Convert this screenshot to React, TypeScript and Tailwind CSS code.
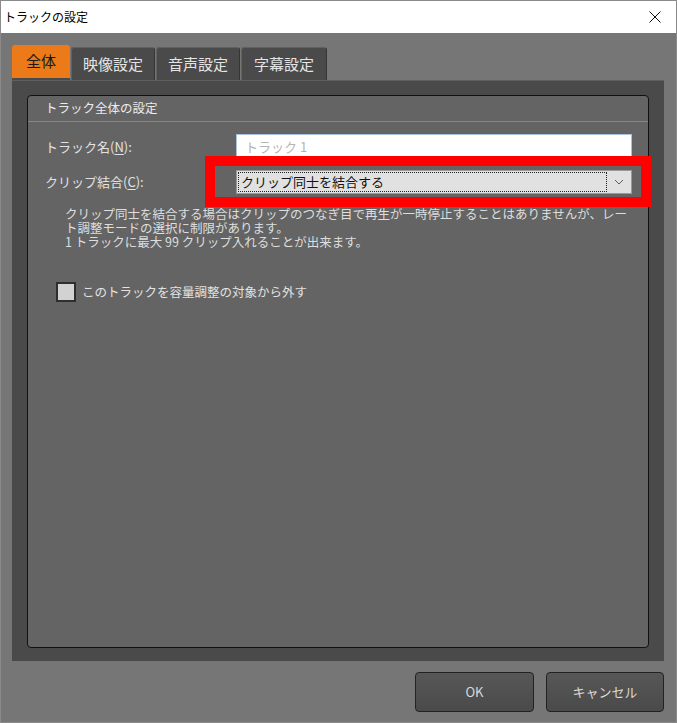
import React from "react";

const jp = { fontFamily: "'Noto Sans CJK JP', 'Noto Sans', sans-serif" };

const Tab = ({ label, w, active }: { label: string; w: string; active?: boolean }) => {
  if (active) {
    return (
      <div className={`${w} h-[35px] bg-[#ec7a18] border-b-2 border-[#4a4a4a] rounded-t-[3px] flex items-center justify-center text-[15px] text-[#1a1a1a]`}>
        {label}
      </div>
    );
  }
  return (
    <div className={`${w} ml-[1px] h-[33px] bg-[#4a4a4a] border-t border-l border-[#606060] border-r border-r-[#353535] rounded-t-[3px] flex items-center justify-center text-[15px] text-[#e4e4e4]`}>
      {label}
    </div>
  );
};

export default function App() {
  return (
    <div
      className="relative w-[677px] h-[723px] border border-[#8a8a8a] flex flex-col"
      style={jp}
    >
      {/* title bar */}
      <div className="h-[32px] bg-white flex items-center justify-between pl-[3px] pr-[15px]">
        <span className="text-[12px] text-black">トラックの設定</span>
        <svg width="12" height="12" viewBox="0 0 12 12">
          <path d="M0.5 0.5 L11.5 11.5 M11.5 0.5 L0.5 11.5" stroke="#111" strokeWidth="1" />
        </svg>
      </div>

      {/* body */}
      <div className="flex-1 bg-[#767676] pt-[12px] pl-[11px] pr-[12px] pb-[10px] flex flex-col">
        <div className="h-[35px] flex items-end">
          <Tab label="全体" w="w-[58px]" active />
          <Tab label="映像設定" w="w-[84px]" />
          <Tab label="音声設定" w="w-[84px]" />
          <Tab label="字幕設定" w="w-[86px]" />
        </div>

        <div className="flex-1 bg-[#4a4a4a] border-t border-[#5e5e5e] pt-[14px] pl-[15px] pr-[15px] pb-[13px] flex flex-col">
          <div className="flex-1 bg-[#646464] border border-[#111] rounded-[4px] flex flex-col">
            <div className="h-[25px] flex items-center pl-[17px] text-[12.5px] text-[#ececec] border-b border-[#858585] box-content">
              トラック全体の設定
            </div>

            <div className="pl-[17px] pr-[16px] flex flex-col text-[13px] text-[#e2e2e2]">
              <div className="mt-[12px] flex items-center">
                <span className="w-[191px]">
                  トラック名(<span className="underline underline-offset-2">N</span>):
                </span>
                <div className="flex-1 h-[26px] bg-white border border-[#a9c1dc] flex items-center pl-[8px] text-[#b4b4b4]">
                  トラック 1
                </div>
              </div>

              <div className="mt-[10px] flex items-center">
                <span className="w-[191px]">
                  クリップ結合(<span className="underline underline-offset-2">C</span>):
                </span>
                <div className="flex-1 h-[24px] bg-[#e1e1e1] border border-[#9a9a9a] flex items-stretch p-[1px]">
                  <div className="flex-1 border border-dotted border-[#222] flex items-center pl-[2px] text-[#111]">
                    クリップ同士を結合する
                  </div>
                  <div className="w-[23px] flex items-center justify-center">
                    <svg width="10" height="6" viewBox="0 0 10 6">
                      <path d="M1 1 L5 5 L9 1" stroke="#5c5c5c" strokeWidth="1" fill="none" />
                    </svg>
                  </div>
                </div>
              </div>

              <div className="mt-[13px] pl-[20px] leading-[14px] text-[12.5px] text-[#dedede]">
                <div>クリップ同士を結合する場合はクリップのつなぎ目で再生が一時停止することはありませんが、レー</div>
                <div>ト調整モードの選択に制限があります。</div>
                <div>1 トラックに最大 99 クリップ入れることが出来ます。</div>
              </div>

              <div className="mt-[33px] ml-[11px] flex items-center">
                <div className="w-[20px] h-[20px] bg-[#d2d2d2] border-2 border-[#2e2e2e]" />
                <span className="ml-[6px] text-[12.5px] text-[#e2e2e2]">このトラックを容量調整の対象から外す</span>
              </div>
            </div>
          </div>
        </div>

        <div className="mt-[11px] flex justify-end gap-[12px]">
          <button className="w-[119px] h-[40px] bg-gradient-to-b from-[#575757] to-[#4a4a4a] border border-[#222] rounded-[4px] text-[13px] text-[#dadada]">
            OK
          </button>
          <button className="w-[118px] h-[40px] bg-gradient-to-b from-[#575757] to-[#4a4a4a] border border-[#222] rounded-[4px] text-[13px] text-[#dadada]">
            キャンセル
          </button>
        </div>
      </div>

      {/* red highlight overlay */}
      <div className="absolute left-[204px] top-[155px] w-[446px] h-[51px] border-[10px] border-[#ff0000]" />
    </div>
  );
}
